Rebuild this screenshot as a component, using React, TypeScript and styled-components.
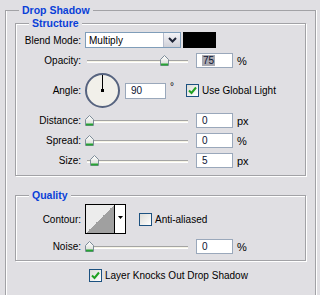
import styled, { createGlobalStyle } from 'styled-components';

const GlobalStyle = createGlobalStyle`
  html, body {
    margin: 0;
    padding: 0;
    background: #e0dfe3;
    overflow: hidden;
  }
  body {
    font-family: "Liberation Sans", Arial, sans-serif;
    font-size: 10px;
    color: #000;
  }
`;

const Group = styled.fieldset<{ $outer?: boolean; $bottom?: number }>`
  margin: ${(p) => (p.$outer ? '4px 4px 0 5px' : '0')};
  padding: ${(p) => (p.$outer ? '0 9px' : `3px 0 ${p.$bottom ?? 6}px 0`)};
  border: 1px solid #a2a2a6;
  border-bottom: ${(p) => (p.$outer ? 'none' : '1px solid #a2a2a6')};
  box-shadow: ${(p) => (p.$outer ? 'inset 1px 0 0 #fff, 1px 0 0 #fff' : 'inset 1px 1px 0 #fff, 1px 1px 0 #fff')};
  min-width: 0;
  height: ${(p) => (p.$outer ? '300px' : 'auto')};
  box-sizing: border-box;
`;

const Legend = styled.legend<{ $indent: number }>`
  margin-left: ${(p) => p.$indent}px;
  padding: 0 3px;
  font-size: 10.5px;
  line-height: 12px;
  font-weight: bold;
  color: #0a3fd8;
  background: #e0dfe3;
`;

const Stack = styled.div`
  display: flex;
  flex-direction: column;
  gap: 5px;
`;

const Row = styled.div<{ $h: number }>`
  display: flex;
  align-items: center;
  height: ${(p) => p.$h}px;
`;

const Label = styled.span`
  width: 65px;
  margin-right: 4px;
  text-align: right;
  white-space: nowrap;
`;

const Select = styled.div`
  width: 96px;
  height: 16px;
  border: 1px solid #7f9db9;
  background: #fff;
  display: flex;
  align-items: center;
  justify-content: space-between;
  padding-left: 3px;
  box-sizing: border-box;
`;

const DropButton = styled.div`
  width: 16px;
  height: 14px;
  border-left: 1px solid #b6bccc;
  background: linear-gradient(#f4f4f8, #cfd0d8);
  display: flex;
  align-items: center;
  justify-content: center;
`;

const Swatch = styled.div`
  width: 33px;
  height: 16px;
  margin-left: 2px;
  background: #000;
`;

const SliderBox = styled.div`
  position: relative;
  width: 105px;
  height: 15px;
  margin-right: 6px;
`;

const Track = styled.div`
  position: absolute;
  left: 2px;
  right: 2px;
  top: 7px;
  height: 1px;
  border-top: 1px solid #a4a4a4;
  border-bottom: 1px solid #fff;
  background: #f6f4e6;
`;

const ThumbWrap = styled.div`
  position: absolute;
  top: 2px;
  width: 9px;
  height: 11px;
`;

const Field = styled.div<{ $w?: number; $h?: number }>`
  width: ${(p) => p.$w ?? 37}px;
  height: ${(p) => p.$h ?? 15}px;
  border: 1px solid #9aa8bb;
  background: #fff;
  box-sizing: border-box;
  display: flex;
  align-items: center;
  padding-left: 5px;
  color: #0b1230;
`;

const Picked = styled.span`
  background: #a9a9b1;
  padding: 0 1px;
`;

const Unit = styled.span`
  margin-left: 4px;
  font-size: 11px;
`;

const Dial = styled.div`
  position: relative;
  width: 35px;
  height: 35px;
  box-sizing: border-box;
  border: 2px solid #56637f;
  border-radius: 50%;
  background: #f1f0ea;
  margin-right: 5px;
`;

const Hand = styled.div`
  position: absolute;
  left: 50%;
  top: 0;
  width: 1px;
  height: 50%;
  margin-left: -0.5px;
  background: #000;
  &::after {
    content: '';
    position: absolute;
    left: -1px;
    bottom: -1.5px;
    width: 3px;
    height: 3px;
    background: #000;
  }
`;

const Degree = styled.span`
  margin: 0 12px 8px 4px;
`;

const Check = styled.div`
  width: 13px;
  height: 13px;
  box-sizing: border-box;
  border: 1px solid #1c5180;
  background: linear-gradient(135deg, #dcdcd7, #fff);
  display: flex;
  align-items: center;
  justify-content: center;
  margin-right: 3px;
  flex: none;
`;

const CheckLabel = styled.label`
  display: flex;
  align-items: center;
  white-space: nowrap;
`;

const Contour = styled.div`
  width: 41px;
  height: 30px;
  box-sizing: border-box;
  border: 1px solid #000;
  display: flex;
  background: #fff;
  margin-right: 13px;
`;

const ContourArt = styled.div`
  width: 28px;
  height: 100%;
  border-right: 1px solid #000;
  background: linear-gradient(to top left, #a0a0a0 50%, #ececec 50%);
`;

const ContourArrow = styled.div`
  flex: 1;
  display: flex;
  align-items: center;
  justify-content: center;
  padding-bottom: 3px;
`;

const Footer = styled.div`
  margin: 8px 0 0 74px;
`;

function Thumb({ left }: { left: number }) {
  return (
    <ThumbWrap style={{ left }}>
      <svg width="9" height="11" viewBox="0 0 9 11">
        <defs>
          <linearGradient id="tg" x1="0" y1="0" x2="0" y2="1">
            <stop offset="0" stopColor="#ffffff" />
            <stop offset="1" stopColor="#d6d9d4" />
          </linearGradient>
        </defs>
        <polygon points="4.5,0.5 8.5,4.5 8.5,10.5 0.5,10.5 0.5,4.5" fill="url(#tg)" stroke="#7d8c99" />
        <rect x="1" y="8.5" width="7" height="2" fill="#27a234" />
      </svg>
    </ThumbWrap>
  );
}

function SliderRow({ label, value, unit, thumb, picked }: { label: string; value: string; unit: string; thumb: number; picked?: boolean }) {
  return (
    <Row $h={15}>
      <Label>{label}</Label>
      <SliderBox>
        <Track />
        <Thumb left={thumb} />
      </SliderBox>
      <Field>{picked ? <Picked>{value}</Picked> : value}</Field>
      <Unit>{unit}</Unit>
    </Row>
  );
}

function CheckMark({ on }: { on: boolean }) {
  return (
    <Check>
      {on && (
        <svg width="9" height="9" viewBox="0 0 9 9">
          <path d="M1 4.5 L3.5 7 L8 1.5" fill="none" stroke="#21a121" strokeWidth="2" />
        </svg>
      )}
    </Check>
  );
}

export default function App() {
  return (
    <>
      <GlobalStyle />
      <Group $outer>
        <Legend $indent={4}>Drop Shadow</Legend>
        <Group $bottom={7} style={{ marginTop: 1 }}>
          <Legend $indent={13}>Structure</Legend>
          <Stack>
            <Row $h={16}>
              <Label>Blend Mode:</Label>
              <Select>
                <span>Multiply</span>
                <DropButton>
                  <svg width="9" height="6" viewBox="0 0 9 6">
                    <path d="M1 1 L4.5 4.5 L8 1" fill="none" stroke="#1e2436" strokeWidth="2" />
                  </svg>
                </DropButton>
              </Select>
              <Swatch />
            </Row>
            <SliderRow label="Opacity:" value="75" unit="%" thumb={75} picked />
            <Row $h={35}>
              <Label>Angle:</Label>
              <Dial>
                <Hand />
              </Dial>
              <Field $w={41} $h={16}>90</Field>
              <Degree>°</Degree>
              <CheckLabel>
                <CheckMark on />
                Use Global Light
              </CheckLabel>
            </Row>
            <SliderRow label="Distance:" value="0" unit="px" thumb={0} />
            <SliderRow label="Spread:" value="0" unit="%" thumb={0} />
            <SliderRow label="Size:" value="5" unit="px" thumb={5} />
          </Stack>
        </Group>
        <Group $bottom={6} style={{ marginTop: 13 }}>
          <Legend $indent={13}>Quality</Legend>
          <Stack>
            <Row $h={30}>
              <Label>Contour:</Label>
              <Contour>
                <ContourArt />
                <ContourArrow>
                  <svg width="5" height="3" viewBox="0 0 5 3">
                    <polygon points="0,0 5,0 2.5,3" fill="#000" />
                  </svg>
                </ContourArrow>
              </Contour>
              <CheckLabel>
                <CheckMark on={false} />
                Anti-aliased
              </CheckLabel>
            </Row>
            <SliderRow label="Noise:" value="0" unit="%" thumb={0} />
          </Stack>
        </Group>
        <Footer>
          <CheckLabel>
            <CheckMark on />
            Layer Knocks Out Drop Shadow
          </CheckLabel>
        </Footer>
      </Group>
    </>
  );
}
